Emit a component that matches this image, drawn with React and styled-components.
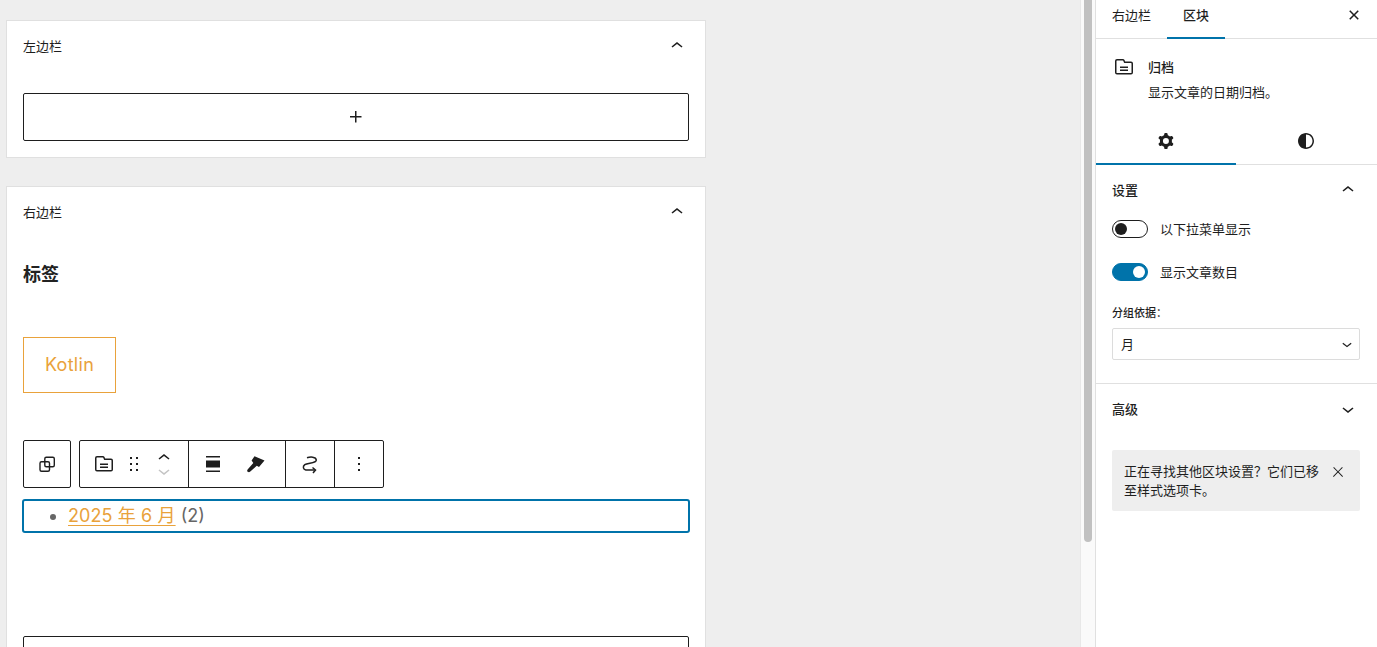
import React from 'react';
import styled, { createGlobalStyle } from 'styled-components';

const GlobalStyle = createGlobalStyle`
  html, body {
    margin: 0;
    padding: 0;
    height: 100%;
    overflow: hidden;
    background: #fff;
  }
  * {
    box-sizing: border-box;
  }
  body {
    font-family: "Liberation Sans", "Noto Sans CJK SC", sans-serif;
    color: #1e1e1e;
  }
  svg {
    flex: none;
    display: block;
  }
`;

const Layout = styled.div`
  display: flex;
  height: 647px;
  overflow: hidden;
`;

const Editor = styled.main`
  width: 1080px;
  height: 647px;
  flex: none;
  overflow: hidden;
  background: #eeeeee;
  padding: 20px 0 0 6px;
`;

const ScrollTrack = styled.div`
  width: 15px;
  flex: none;
  padding: 0 3px 0 3px;
  background: #fafafa;
  border-left: 1px solid #e8e8e8;
`;

const ScrollThumb = styled.div`
  width: 8px;
  height: 542px;
  background: #c1c1c1;
  border-radius: 0 0 4px 4px;
`;

const Card = styled.section`
  width: 700px;
  background: #fff;
  border: 1px solid #e0e0e0;
  padding: 0 16px;
  margin-bottom: 28px;
`;

const CardHeader = styled.header`
  display: flex;
  align-items: center;
  justify-content: space-between;
  height: 50px;
  font-size: 13px;
  margin-right: -1px;
  padding-right: 1px;
`;

const Label = styled.span`
  padding-bottom: 2px;
`;

const Appender = styled.div`
  width: 666px;
  height: 48px;
  margin-top: ${({ $mt }) => $mt || 0}px;
  border: 1px solid #1e1e1e;
  border-radius: 2px;
  display: flex;
  align-items: center;
  justify-content: center;
  margin-bottom: 16px;
`;

const WidgetTitle = styled.h2`
  font-size: 18px;
  font-weight: 700;
  line-height: 24px;
  margin: 26px 0 50px;
  color: #222;
`;

const Tag = styled.a`
  display: block;
  width: 93px;
  height: 56px;
  line-height: 54px;
  text-align: center;
  border: 1px solid #e9a23b;
  color: #e9a23b;
  font-family: Inter, "Liberation Sans", sans-serif;
  font-size: 18px;
  letter-spacing: 0.3px;
  margin-bottom: 47px;
`;

const Toolbars = styled.div`
  display: flex;
  gap: 8px;
  height: 48px;
  margin-bottom: 11px;
`;

const ToolGroup = styled.div`
  display: flex;
  height: 48px;
  border: 1px solid #1e1e1e;
  border-radius: 2px;
  background: #fff;
`;

const ToolSection = styled.div`
  display: flex;
  align-items: center;
  justify-content: center;
  width: ${({ $w }) => $w}px;
  height: 100%;
  border-left: ${({ $first }) => ($first ? 'none' : '1px solid #1e1e1e')};
`;

const MoverSection = styled(ToolSection)`
  justify-content: flex-start;
  gap: 6px;
  padding-left: 12px;
`;

const AlignSection = styled(ToolSection)`
  justify-content: flex-start;
`;

const ToolIcon = styled.span`
  display: flex;
  align-items: center;
  justify-content: center;
  width: ${({ $w }) => $w || 24}px;
  flex: none;
`;

const Mover = styled.div`
  display: flex;
  flex-direction: column;
  align-items: center;
  width: 24px;
  svg:last-child {
    margin-top: -11px;
  }
`;

const ArchiveBlock = styled.ul`
  width: 668px;
  height: 34px;
  margin: 0 0 103px -1px;
  padding: 0 0 0 44px;
  border: 2px solid #0073aa;
  border-radius: 3px;
  list-style: disc;
  color: #666;
  font-family: Inter, "Liberation Sans", "Noto Sans CJK SC", sans-serif;
  font-size: 18px;
  line-height: 30px;
  li::marker {
    color: #666;
  }
`;

const ArchiveLink = styled.a`
  color: #e9a23b;
  text-decoration: underline;
  text-underline-offset: 3px;
  text-decoration-thickness: 1px;
  letter-spacing: 0.1px;
`;

const Sidebar = styled.aside`
  flex: 1;
  min-width: 0;
  border-left: 1px solid #e0e0e0;
  background: #fff;
  font-size: 13px;
`;

const TabBar = styled.div`
  display: flex;
  align-items: stretch;
  height: 39px;
  border-bottom: 1px solid #e0e0e0;
`;

const Tab = styled.div`
  width: ${({ $w }) => $w}px;
  height: 39px;
  display: flex;
  align-items: center;
  justify-content: center;
  padding-bottom: 9px;
  font-size: 13px;
  font-weight: ${({ $active }) => ($active ? 500 : 400)};
  border-bottom: 2px solid ${({ $active }) => ($active ? '#0073aa' : 'transparent')};
`;

const TabClose = styled.div`
  margin-left: auto;
  margin-right: 11px;
  height: 30px;
  display: flex;
  align-items: center;
`;

const BlockCard = styled.div`
  display: flex;
  padding: 16px 16px 0 16px;
  height: 85px;
`;

const BlockIcon = styled.div`
  width: 24px;
  height: 24px;
  margin-right: 12px;
  flex: none;
`;

const BlockText = styled.div`
  padding-top: 1px;
`;

const BlockName = styled.div`
  font-size: 13px;
  font-weight: 500;
  line-height: 24px;
`;

const BlockDesc = styled.div`
  font-size: 13px;
  line-height: 18px;
  margin-top: 4px;
`;

const InspectorTabs = styled.div`
  display: flex;
  height: 41px;
  border-bottom: 1px solid #e0e0e0;
`;

const InspectorTab = styled.div`
  width: 140px;
  height: 41px;
  display: flex;
  align-items: center;
  justify-content: center;
  padding-bottom: 6px;
  border-bottom: 2px solid ${({ $active }) => ($active ? '#0073aa' : 'transparent')};
`;

const PanelHead = styled.div`
  display: flex;
  align-items: center;
  justify-content: space-between;
  padding: 0 17px 0 16px;
  height: 50px;
  font-size: 13px;
  font-weight: 500;
`;

const SettingsPanel = styled.div`
  height: 219px;
  border-bottom: 1px solid #e0e0e0;
`;

const ToggleList = styled.div`
  padding-top: 5px;
`;

const ToggleRow = styled.div`
  display: flex;
  align-items: center;
  gap: 12px;
  height: 18px;
  margin: 0 16px ${({ $mb }) => $mb}px;
  font-size: 13px;
`;

const Toggle = styled.div`
  width: 36px;
  height: 18px;
  border-radius: 9px;
  border: 1px solid ${({ $on }) => ($on ? '#0073aa' : '#1e1e1e')};
  background: ${({ $on }) => ($on ? '#0073aa' : '#fff')};
  display: flex;
  align-items: center;
  justify-content: ${({ $on }) => ($on ? 'flex-end' : 'flex-start')};
  padding: 0 2px;
`;

const Knob = styled.div`
  width: 12px;
  height: 12px;
  border-radius: 50%;
  background: ${({ $on }) => ($on ? '#fff' : '#1e1e1e')};
`;

const FieldLabel = styled.div`
  font-size: 11px;
  font-weight: 500;
  line-height: 16px;
  margin: 0 16px 7px;
`;

const SelectBox = styled.div`
  display: flex;
  align-items: center;
  justify-content: space-between;
  height: 32px;
  margin: 0 17px 0 16px;
  padding: 0 2px 0 8px;
  border: 1px solid #dcdcdc;
  border-radius: 2px;
  font-size: 13px;
`;

const Notice = styled.div`
  display: flex;
  justify-content: space-between;
  margin: 16px 17px 0 16px;
  height: 61px;
  padding: 12px 14px 11px 12px;
  background: #eeeeee;
  border-radius: 2px;
  font-size: 13px;
  line-height: 19px;
`;

const NoticeText = styled.div`
  width: 198px;
`;

const NoticeClose = styled.div`
  padding-top: 2px;
`;

const Icon = ({ d, size = 24, color = '#1e1e1e', evenodd }) => (
  <svg width={size} height={size} viewBox="0 0 24 24" fill={color} aria-hidden="true">
    <path d={d} fillRule={evenodd ? 'evenodd' : 'nonzero'} clipRule={evenodd ? 'evenodd' : 'nonzero'} />
  </svg>
);

const paths = {
  chevronUp: 'M6.5 12.4L12 8l5.5 4.4-.9 1.2L12 10l-4.5 3.6-1-1.2z',
  chevronDown: 'M17.5 11.6L12 16l-5.5-4.4.9-1.2L12 14l4.5-3.6 1 1.2z',
  plus: 'M11 12.5V17.5H12.5V12.5H17.5V11H12.5V6H11V11H6V12.5H11Z',
  close: 'M12 13.06l3.712 3.713 1.061-1.06L13.061 12l3.712-3.712-1.06-1.06L12 10.938 8.288 7.227l-1.061 1.06L10.939 12l-3.712 3.712 1.06 1.061L12 13.061z',
  closeThin: 'M13 11.8l6.1-6.3-1-1-6.1 6.2-6.1-6.2-1 1 6.1 6.3-6.5 6.7 1 1 6.5-6.6 6.5 6.6 1-1z',
  archive: 'M11.934 7.406a1 1 0 0 0 .914.594H19a.5.5 0 0 1 .5.5v9a.5.5 0 0 1-.5.5H5a.5.5 0 0 1-.5-.5V6a.5.5 0 0 1 .5-.5h5.764a.5.5 0 0 1 .447.276l.723 1.63Zm1.064-1.216a.5.5 0 0 0 .462.31H19a2 2 0 0 1 2 2v9a2 2 0 0 1-2 2H5a2 2 0 0 1-2-2V6a2 2 0 0 1 2-2h5.764a2 2 0 0 1 1.789 1.106l.445 1.084ZM8 13V11.5h8V13H8Zm0 3v-1.5h8V16H8Z',
  drag: 'M8 7h2V5H8v2zm0 6h2v-2H8v2zm0 6h2v-2H8v2zm6-14v2h2V5h-2zm0 8h2v-2h-2v2zm0 6h2v-2h-2v2z',
  more: 'M13 19h-2v-2h2v2zm0-6h-2v-2h2v2zm0-6h-2V5h2v2z',
  align: 'M5 4h14v1.5H5zM5 8.5h14v7H5zM5 18.5h14V20H5z',
  brush: 'M11.5 4.2l10 4.3-5.5 6.5-2.2-1.2-6.5 5.8q-1.3 1.1-2.5.2t-.2-2.4l5.7-6.3-1.7-2.6z',
  cog: 'M10.289 4.836A1 1 0 0 1 11.275 4h1.306a1 1 0 0 1 .987.836l.244 1.466c.787.26 1.503.679 2.108 1.218l1.393-.522a1 1 0 0 1 1.216.437l.653 1.13a1 1 0 0 1-.23 1.273l-1.148.944a6.025 6.025 0 0 1 0 2.435l1.149.946a1 1 0 0 1 .23 1.272l-.653 1.13a1 1 0 0 1-1.216.437l-1.394-.522c-.605.54-1.32.958-2.108 1.218l-.244 1.466a1 1 0 0 1-.987.836h-1.306a1 1 0 0 1-.986-.836l-.244-1.466a5.995 5.995 0 0 1-2.108-1.218l-1.394.522a1 1 0 0 1-1.217-.436l-.653-1.131a1 1 0 0 1 .23-1.272l1.149-.946a6.026 6.026 0 0 1 0-2.435l-1.148-.944a1 1 0 0 1-.23-1.272l.653-1.131a1 1 0 0 1 1.217-.437l1.393.522a5.994 5.994 0 0 1 2.108-1.218l.244-1.466ZM14.929 12a3 3 0 1 1-6 0 3 3 0 0 1 6 0Z',
  styles: 'M12 4c-4.4 0-8 3.6-8 8s3.6 8 8 8 8-3.6 8-8-3.6-8-8-8zm0 14.5V5.5c3.6 0 6.5 2.9 6.5 6.5s-2.9 6.5-6.5 6.5z',
};

const CopyIcon = () => (
  <svg width="24" height="24" viewBox="0 0 24 24" fill="none" stroke="#1e1e1e" strokeWidth="1.4" aria-hidden="true">
    <rect x="9.8" y="5.2" width="9.5" height="9.5" rx="1.5" />
    <rect x="5" y="9.8" width="9.5" height="9.5" rx="1.5" />
  </svg>
);

const TransformIcon = () => (
  <svg width="24" height="24" viewBox="0 0 24 24" fill="none" stroke="#1e1e1e" strokeWidth="1.5" aria-hidden="true">
    <path d="M9 5.8c3-1 9-1.3 9.3 2.2.3 3.5-9 2.8-11.5 4.7-2.5 2-1.5 4.7 1 5.2h9" />
    <path d="M14.5 15.5l3 2.5-2.5 3" />
  </svg>
);

export default function App() {
  return (
    <>
      <GlobalStyle />
      <Layout>
        <Editor>
          <Card>
            <CardHeader>
              <Label>左边栏</Label>
              <Icon d={paths.chevronUp} />
            </CardHeader>
            <Appender $mt={22}>
              <Icon d={paths.plus} />
            </Appender>
          </Card>
          <Card>
            <CardHeader>
              <Label>右边栏</Label>
              <Icon d={paths.chevronUp} />
            </CardHeader>
            <WidgetTitle>标签</WidgetTitle>
            <Tag>Kotlin</Tag>
            <Toolbars>
              <ToolGroup>
                <ToolSection $first $w={46}>
                  <CopyIcon />
                </ToolSection>
              </ToolGroup>
              <ToolGroup>
                <MoverSection $first $w={108}>
                  <Icon d={paths.archive} evenodd />
                  <Icon d={paths.drag} />
                  <Mover>
                    <Icon d={paths.chevronUp} />
                    <Icon d={paths.chevronDown} color="#c4c4c4" />
                  </Mover>
                </MoverSection>
                <AlignSection $w={97}>
                  <ToolIcon $w={48}><Icon d={paths.align} /></ToolIcon>
                  <ToolIcon $w={36}><Icon d={paths.brush} /></ToolIcon>
                </AlignSection>
                <ToolSection $w={49}>
                  <TransformIcon />
                </ToolSection>
                <ToolSection $w={49}>
                  <Icon d={paths.more} />
                </ToolSection>
              </ToolGroup>
            </Toolbars>
            <ArchiveBlock>
              <li>
                <ArchiveLink>2025 年 6 月</ArchiveLink> (2)
              </li>
            </ArchiveBlock>
            <Appender />
          </Card>
        </Editor>
        <ScrollTrack>
          <ScrollThumb />
        </ScrollTrack>
        <Sidebar>
          <TabBar>
            <Tab $w={71}>右边栏</Tab>
            <Tab $w={58} $active>区块</Tab>
            <TabClose><Icon d={paths.close} /></TabClose>
          </TabBar>
          <BlockCard>
            <BlockIcon><Icon d={paths.archive} evenodd /></BlockIcon>
            <BlockText>
              <BlockName>归档</BlockName>
              <BlockDesc>显示文章的日期归档。</BlockDesc>
            </BlockText>
          </BlockCard>
          <InspectorTabs>
            <InspectorTab $active><Icon d={paths.cog} evenodd /></InspectorTab>
            <InspectorTab><Icon d={paths.styles} evenodd /></InspectorTab>
          </InspectorTabs>
          <SettingsPanel>
            <PanelHead>
              <Label>设置</Label>
              <Icon d={paths.chevronUp} />
            </PanelHead>
            <ToggleList>
              <ToggleRow $mb={25}>
                <Toggle><Knob /></Toggle>
                <Label>以下拉菜单显示</Label>
              </ToggleRow>
              <ToggleRow $mb={24}>
                <Toggle $on><Knob $on /></Toggle>
                <Label>显示文章数目</Label>
              </ToggleRow>
            </ToggleList>
            <FieldLabel>分组依据：</FieldLabel>
            <SelectBox>
              <Label>月</Label>
              <Icon d={paths.chevronDown} size={20} />
            </SelectBox>
          </SettingsPanel>
          <PanelHead>
            <Label>高级</Label>
            <Icon d={paths.chevronDown} />
          </PanelHead>
          <Notice>
            <NoticeText>正在寻找其他区块设置？它们已移至样式选项卡。</NoticeText>
            <NoticeClose><Icon d={paths.closeThin} size={16} /></NoticeClose>
          </Notice>
        </Sidebar>
      </Layout>
    </>
  );
}
